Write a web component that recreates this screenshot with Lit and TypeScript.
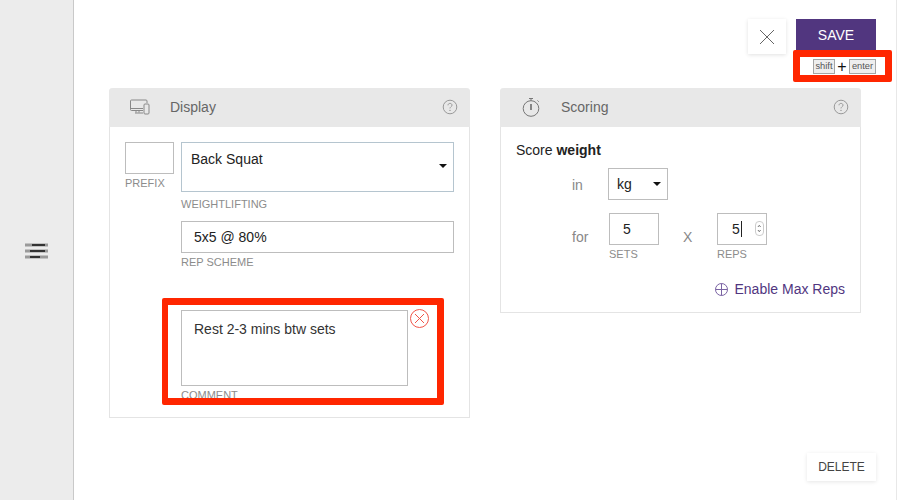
import { LitElement, html, css } from "lit";
import { customElement } from "lit/decorators.js";

const help = html`<svg class="help" width="16" height="16" viewBox="0 0 16 16" fill="none" stroke="#999"><circle cx="8" cy="8" r="6.8"/><path d="M6 6.3c0-1.2.9-1.9 2-1.9s2 .7 2 1.8c0 1.4-2 1.6-2 3.2"/><circle cx="8" cy="11.4" r=".6" fill="#888" stroke="none"/></svg>`;

@customElement("app-root")
export class AppRoot extends LitElement {
  static styles = css`
    :host { display: flex; width: 897px; height: 500px; overflow: hidden; position: relative; background: #fff;
      font-family: "Liberation Sans", Arial, sans-serif; color: #333; font-size: 14px; }
    .side { width: 73px; height: 500px; background: #ececec; border-right: 1px solid #c9c9c9; display: flex; flex: none;
      align-items: center; justify-content: center; }
    .side svg { display: block; margin-top: 1px; }
    .main { width: 822px; flex: none; border-right: 1px solid #e8e8e8; display: flex; flex-direction: column; }
    .actions { display: flex; justify-content: flex-end; gap: 10px; padding: 19px 20px 0 0; height: 88px; box-sizing: border-box; }
    .close { width: 38px; height: 35px; background: #fff; border: 0; padding: 0; box-shadow: 0 1px 4px rgba(0,0,0,.12); display: flex; align-items: center; justify-content: center; }
    .savebox { width: 80px; }
    .save { width: 80px; height: 32px; background: #51367f; color: #fff; border: 0; padding: 0; font: 14px "Liberation Sans", Arial, sans-serif; display: block; }
    .keys { display: flex; align-items: center; margin-top: 7px; margin-left: 17px; width: 63px; color: #111; }
    .key { font-size: 9.3px; line-height: 13px; height: 13px; border: 1px solid #a5a5a5; background: #eee; color: #555; text-align: center; }
    .key.s { width: 20px; }
    .key.e { width: 25px; }
    .plus { width: 14px; text-align: center; font-size: 16px; line-height: 15px; margin-top: 1px; }
    .cards { display: flex; gap: 30px; padding-left: 35px; align-items: flex-start; }
    .card { width: 361px; box-sizing: border-box; border: 1px solid #e4e4e4; border-top: 0; border-radius: 4px 4px 0 0; }
    .card.l { height: 330px; }
    .card.r { height: 225px; }
    .head { height: 39px; box-sizing: border-box; padding-bottom: 1px; margin: 0 -1px; background: #e8e8e8; border-radius: 4px 4px 0 0; display: flex; align-items: center; color: #666; font-size: 14px; }
    .head .ic { width: 61px; display: flex; justify-content: center; flex: none; }
    .head .t { flex: 1; }
    .help { margin: 0 12px 0 0; flex: none; }
    .lab { font-size: 11px; color: #8c8c8c; line-height: 12px; display: block; }
    .body { padding: 15px 15px 0; }
    .box { border: 1px solid #bdbdbd; box-sizing: border-box; background: #fff; color: #222; }
    .row { display: flex; gap: 7px; }
    .prefix { width: 49px; height: 32px; }
    .col { width: 273px; }
    .sel { height: 50px; border-color: #b5c5cf; padding: 8px 6px 0 9px; display: flex; justify-content: space-between; line-height: 16px; }
    .caret { width: 0; height: 0; border: 4px solid transparent; border-top-color: #111; border-bottom: 0; margin-top: 13px; }
    .one { height: 32px; padding: 0 12px; line-height: 30px; }
    .mt3 { margin-top: 3px; }
    .mt6 { margin-top: 6px; }
    .mt11 { margin-top: 11px; }
    .comm { margin-top: 42px; margin-left: 56px; display: flex; gap: 2px; align-items: flex-start; }
    .ta { width: 227px; height: 76px; padding: 10px 12px; line-height: 16px; color: #333; }
    .x { margin-top: -1px; display: block; }
    .score { padding: 15px 15px 0; color: #222; line-height: 16px; }
    .f { display: flex; align-items: flex-start; color: #888; }
    .unit { margin: 10px 0 0 56px; }
    .unit .w { width: 36px; padding-top: 9px; }
    .kg { width: 60px; height: 32px; display: flex; justify-content: space-between; padding: 0 6px 0 8px; line-height: 30px; }
    .for { margin: 13px 0 0 56px; }
    .for .w { width: 37px; padding-top: 16px; }
    .n { width: 50px; }
    .n .box { width: 50px; height: 32px; line-height: 30px; padding-left: 13px; }
    .n .reps { display: flex; position: relative; padding-left: 14px; align-items: center; }
    .cursor { width: 1px; height: 16px; background: #222; margin-left: 1px; }
    .spin { position: absolute; right: 2px; top: 7px; width: 9px; height: 15px; border: 1px solid #ccc; border-radius: 4px; box-sizing: border-box; display: block; }
    .xx { width: 58px; padding: 16px 0 0 24px; box-sizing: border-box; }
    .en { display: flex; justify-content: flex-end; align-items: center; gap: 6px; color: #51367f; margin-top: 21px; line-height: 16px; }
    .bottom { display: flex; justify-content: flex-end; padding: 35px 20px 0 0; }
    .del { width: 69px; height: 28px; background: #fff; border: 0; padding: 0; box-shadow: 0 1px 4px rgba(0,0,0,.1); font: 12px "Liberation Sans", Arial, sans-serif; color: #444; }
    .red { position: absolute; box-sizing: border-box; border: 7px solid #ff2600; border-radius: 2px; pointer-events: none; }
    .r1 { left: 793px; top: 50px; width: 99px; height: 32px; }
    .r2 { left: 162px; top: 298px; width: 282px; height: 107px; border-left-width: 6px; }
  `;
  render() {
    return html`
      <aside class="side">
        <svg width="23" height="16" viewBox="0 0 23 16" fill="none">
          <path d="M0 2h23M0 8h23M0 14h23" stroke="#9a9a9a" stroke-width="3"/>
          <path d="M7 2h13M5 8h15M5 14h10" stroke="#333" stroke-width="2"/>
        </svg>
      </aside>
      <main class="main">
        <div class="actions">
          <button class="close" aria-label="Close"><svg width="16" height="16" viewBox="0 0 16 16" stroke="#666" fill="none"><path d="M1 1l14 14M15 1L1 15"/></svg></button>
          <div class="savebox">
            <button class="save">SAVE</button>
            <div class="keys"><span class="key s">shift</span><span class="plus">+</span><span class="key e">enter</span></div>
          </div>
        </div>
        <div class="cards">
          <section class="card l">
            <div class="head">
              <span class="ic"><svg width="20" height="16" viewBox="0 0 20 16" fill="none" stroke="#888"><path d="M13 11.5H1.5a1 1 0 0 1-1-1V2a1 1 0 0 1 1-1H16a1 1 0 0 1 1 1v2"/><path d="M.5 9.5H13M6 11.5v2M9 11.5v2M5 14h8"/><rect x="14" y="5" width="5" height="10" rx="1"/></svg></span>
              <span class="t">Display</span>${help}
            </div>
            <div class="body">
              <div class="row">
                <div><div class="box prefix"></div><span class="lab mt3">PREFIX</span></div>
                <div class="col">
                  <div class="box sel">Back Squat<span class="caret"></span></div>
                  <span class="lab mt6">WEIGHTLIFTING</span>
                  <div class="box one mt11">5x5 @ 80%</div>
                  <span class="lab mt3">REP SCHEME</span>
                </div>
              </div>
              <div class="comm">
                <div><div class="box ta">Rest 2-3 mins btw sets</div><span class="lab mt3">COMMENT</span></div>
                <svg class="x" width="19" height="19" viewBox="0 0 19 19" fill="none" stroke="#f0564a"><circle cx="9.5" cy="9.5" r="9"/><path d="M5 5l9 9M14 5l-9 9"/></svg>
              </div>
            </div>
          </section>
          <section class="card r">
            <div class="head">
              <span class="ic"><svg width="20" height="20" viewBox="0 0 20 20" fill="none" stroke="#777"><circle cx="10" cy="11.5" r="7.8"/><path d="M8 1.5h4M10 1.5v2.2"/><path d="M10 7v6" stroke="#444" stroke-width="1.2"/><path d="M16.5 3.5l1.2 1.2"/></svg></span>
              <span class="t">Scoring</span>${help}
            </div>
            <div class="score">
              Score <b>weight</b>
              <div class="f unit"><span class="w">in</span><div class="box kg">kg<span class="caret"></span></div></div>
              <div class="f for">
                <span class="w">for</span>
                <div class="n"><div class="box">5</div><span class="lab mt3">SETS</span></div>
                <span class="xx">X</span>
                <div class="n"><div class="box reps">5<span class="cursor"></span><svg class="spin" viewBox="0 0 9 15" fill="none" stroke="#444"><path d="M2.5 5.5l1.7-2 1.7 2M2.5 9.5l1.7 2 1.7-2"/></svg></div><span class="lab mt3">REPS</span></div>
              </div>
              <div class="en"><svg width="13" height="13" viewBox="0 0 13 13" fill="none" stroke="#7a63a3"><circle cx="6.5" cy="6.5" r="6"/><path d="M6.5 .5v12M.5 6.5h12"/></svg>Enable Max Reps</div>
            </div>
          </section>
        </div>
        <div class="bottom"><button class="del">DELETE</button></div>
      </main>
      <div class="red r1"></div>
      <div class="red r2"></div>
    `;
  }
}
